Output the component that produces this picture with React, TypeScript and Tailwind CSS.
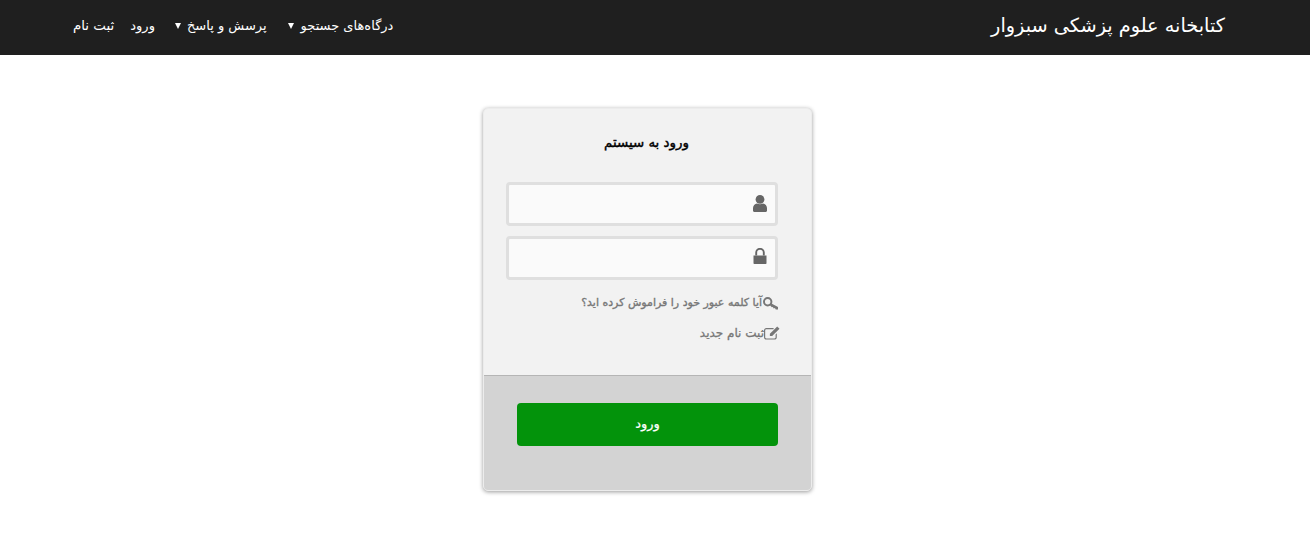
import React from 'react';

const Caret = () => (
    <span className="inline-block w-0 h-0 border-x-[3.5px] border-x-transparent border-t-[6px] border-t-white" />
);

const UserIcon = () => (
    <svg width="14" height="17" viewBox="0 0 14 17" fill="#666666" className="mb-[2px]">
        <circle cx="7" cy="4.400" r="4.400" />
        <path d="M0 15.500v-2.500C0 10.500 1.800 9 4 8.400c1.800 1 4.200 1 6 0 2.200.6 4 2.100 4 4.600v2.500C14 16.400 13.400 17 12.500 17h-11C.6 17 0 16.400 0 15.500z" />
    </svg>
);

const LockIcon = () => (
    <svg width="14" height="16" viewBox="0 0 14 16" fill="#666666" className="mb-[4px]">
        <path d="M.5 7.500h13v7.700a.8.8 0 0 1-.8.8H1.300a.8.8 0 0 1-.8-.8z" />
        <path d="M3.200 7.500V4.600a3.800 3.800 0 0 1 7.600 0v2.900" fill="none" stroke="#666666" strokeWidth="1.900" />
    </svg>
);

const KeyIcon = () => (
    <svg width="15" height="13" viewBox="0 0 15 13" fill="#777777">
        <path fillRule="evenodd" d="M4.700 0a4.700 4.700 0 1 1 0 9.400 4.700 4.700 0 0 1 0-9.400zm0 2a2.700 2.700 0 1 0 0 5.400 2.700 2.700 0 0 0 0-5.400z" />
        <path d="M8 6.200l7 3.800v2.600h-2.200l-.9-1.600-1.200.6-.8-1.600-1.100.2-2-2.200z" />
    </svg>
);

const EditIcon = () => (
    <svg width="16" height="14" viewBox="0 0 16 14" fill="#777777" className="-mr-[2px]">
        <path d="M2.400 2h7.200v1.200H2.400c-.7 0-1.200.5-1.200 1.200v6.800c0 .7.500 1.200 1.200 1.200h8c.7 0 1.200-.5 1.200-1.200V8.400l1.200-1.200v4c0 1.400-1 2.400-2.400 2.400h-8C1 13.600 0 12.600 0 11.200V4.400C0 3 1 2 2.400 2z" />
        <path d="M13.200.4l2.300 2.300-7.300 7.300H5.900V7.700z" />
    </svg>
);

const App = () => {
    return (
        <div dir="rtl" className="min-h-[535px] bg-white font-['DejaVu_Sans',sans-serif]">
            {/* Navbar */}
            <nav className="h-[55px] bg-[#1f1f1f] flex items-center justify-between pr-[85px] pl-[73px] text-white">
                <a className="text-[19.300px] leading-none pb-[3px]">کتابخانه علوم پزشکی سبزوار</a>
                <ul className="flex items-center gap-[16px] text-[13px] pb-[3px]">
                    <li className="flex items-center gap-[7px]">درگاه‌های جستجو <Caret /></li>
                    <li className="flex items-center gap-[6px] mr-[5px]">پرسش و پاسخ <Caret /></li>
                    <li className="mr-[4px]">ورود</li>
                    <li className="text-[13.400px]">ثبت نام</li>
                </ul>
            </nav>

            {/* Card */}
            <div className="flex justify-center pt-[53px] pr-[15px]">
                <div className="w-[329px] h-[383px] rounded-[5px] bg-[#f2f2f2] border border-[#ececec] shadow-[0_1px_4px_rgba(0,0,0,0.4)] overflow-hidden flex flex-col">
                    <div className="h-[267px] border-b border-[#b5b5b5] pr-[33px] pl-[26px]">
                        <h2 className="text-[13.400px] [-webkit-text-stroke:0.4px_black] text-black text-center pt-[24px] pl-[5px] leading-[20px]">ورود به سیستم</h2>
                        <div className="mt-[29px] flex flex-col gap-[10px]">
                            <div className="h-[44px] w-[272px] rounded-[4px] border-[3px] border-[#dfdfdf] bg-[#fafafa] flex items-center pr-[8px]">
                                <UserIcon />
                            </div>
                            <div className="h-[44px] w-[272px] rounded-[4px] border-[3px] border-[#dfdfdf] bg-[#fafafa] flex items-center pr-[8px]">
                                <LockIcon />
                            </div>
                        </div>
                        <div className="mt-[13px] flex items-center gap-[1px] text-[11px] [-webkit-text-stroke:0.35px_#777777] text-[#777777] leading-[20px]">
                            <KeyIcon />
                            <span>آیا کلمه عبور خود را فراموش کرده اید؟</span>
                        </div>
                        <div className="mt-[10px] flex items-center text-[12px] [-webkit-text-stroke:0.3px_#777777] text-[#777777] leading-[20px]">
                            <EditIcon />
                            <span>ثبت نام جدید</span>
                        </div>
                    </div>
                    <div className="flex-1 bg-[#d3d3d3] pt-[27px] px-[33px]">
                        <button className="w-[261px] h-[43px] pb-[2px] rounded-[4px] bg-[#03930b] text-white text-[13px] [-webkit-text-stroke:0.2px_white]">ورود</button>
                    </div>
                </div>
            </div>
        </div>
    );
};

export default App;
